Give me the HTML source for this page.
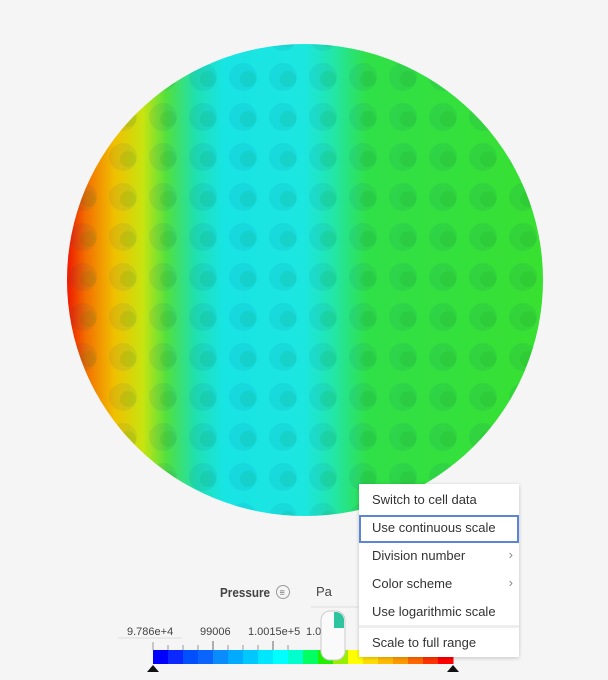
<!DOCTYPE html>
<html><head><meta charset="utf-8"><style>
body{margin:0;width:608px;height:680px;background:#f5f5f5;font-family:"Liberation Sans",sans-serif;position:relative;overflow:hidden}
.menu{position:absolute;left:359px;top:484px;width:160px;height:173px;background:#fff;box-shadow:0 1px 4px rgba(0,0,0,.2);font-size:13px;color:#333}
.menu div{position:absolute;left:13px}
.sel{position:absolute;left:0;top:31px;width:156px;height:24px;border:2px solid #5b86d6}
.arr{position:absolute;right:6px!important;left:auto!important;color:#888}
</style></head><body>
<svg width="608" height="680" style="position:absolute;left:0;top:0">
<defs>
<linearGradient id="g" x1="67" x2="543" y1="0" y2="0" gradientUnits="userSpaceOnUse">
<stop offset="0" stop-color="#ee1800"/><stop offset="0.04" stop-color="#f27000"/><stop offset="0.1" stop-color="#f0c000"/><stop offset="0.16" stop-color="#c8e410"/><stop offset="0.21" stop-color="#50e040"/><stop offset="0.27" stop-color="#20e0b0"/><stop offset="0.33" stop-color="#18e4e4"/><stop offset="0.5" stop-color="#1ce6e0"/><stop offset="0.56" stop-color="#22e6a8"/><stop offset="0.63" stop-color="#30e048"/><stop offset="1" stop-color="#38e030"/>
</linearGradient>
<pattern id="d" x="23" y="17" width="40" height="40" patternUnits="userSpaceOnUse">
<circle cx="20" cy="20" r="14" fill="rgba(0,60,140,0.07)"/><circle cx="25" cy="22" r="8" fill="rgba(0,120,0,0.08)"/>
</pattern>
<clipPath id="c"><ellipse cx="305" cy="280" rx="238" ry="236"/></clipPath>
</defs>
<ellipse cx="305" cy="280" rx="238" ry="236" fill="url(#g)"/>
<rect x="60" y="40" width="490" height="480" fill="url(#d)" clip-path="url(#c)"/>
<text x="220" y="597" font-size="12.5" font-weight="bold" fill="#444" textLength="50" lengthAdjust="spacingAndGlyphs">Pressure</text>
<circle cx="283" cy="592" r="6.5" fill="none" stroke="#999"/><text x="279.5" y="595.5" font-size="9" fill="#666">≡</text>
<text x="316" y="596" font-size="13" fill="#444">Pa</text>
<line x1="311" y1="607" x2="360" y2="607" stroke="#ddd"/>
<line x1="118" y1="638" x2="182" y2="638" stroke="#ddd"/>
<g font-size="11" fill="#444"><text x="127" y="635">9.786e+4</text><text x="200" y="635">99006</text><text x="248" y="635">1.0015e+5</text><text x="306" y="635">1.0</text></g>
<g stroke="#999"><path d="M153 642v8M168 645v5M183 645v5M198 645v5M213 645v5M228 645v5M243 645v5M258 645v5M273 645v5M288 645v5"/><path d="M213 641v9M273 641v9" stroke="#666"/></g>
<g id="bar"></g>
<path d="M147 672l6-7 6 7zM447 672l6-7 6 7z" fill="#111"/>
<rect x="321" y="611" width="24" height="49" rx="9" fill="#fafafa" stroke="#ccc"/>
<path d="M334 612h2a8 8 0 0 1 8 8v8h-10z" fill="#2ec4a0"/>
</svg>
<script>
var c=["#0000ff","#0a28ff","#0050ff","#0a64ff","#0a8cff","#00aaff","#00c8ff","#00e6ff","#00ffff","#00ffcc","#00ff60","#22ee00","#99ee00","#ffff00","#ffdd00","#ffbb00","#ff9900","#ff6600","#ff3300","#ff0000"];
var g=document.getElementById('bar'),s='';
for(var i=0;i<20;i++){s+='<rect x="'+(153+i*15)+'" y="650" width="15.5" height="14" fill="'+c[i]+'"/>';}
g.innerHTML=s;
</script>
<div class="menu">
<div style="top:8px">Switch to cell data</div>
<span class="sel"></span>
<div style="top:36px">Use continuous scale</div>
<div style="top:64px">Division number</div><div class="arr" style="top:63px">›</div>
<div style="top:92px">Color scheme</div><div class="arr" style="top:91px">›</div>
<div style="top:120px">Use logarithmic scale</div>
<div style="left:0;top:141px;width:160px;height:3px;background:#eee"></div>
<div style="top:151px">Scale to full range</div>
</div>
</body></html>
